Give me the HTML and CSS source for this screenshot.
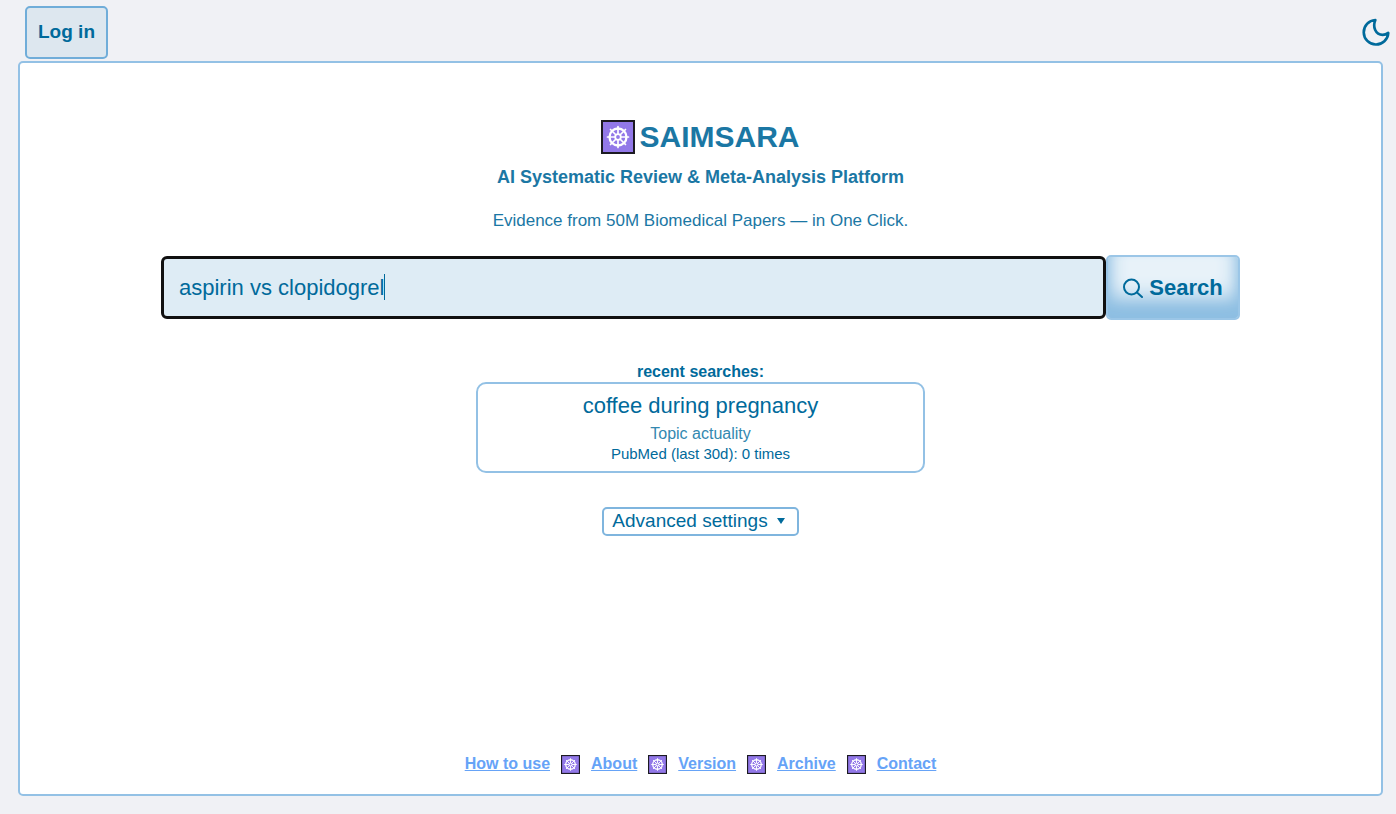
FILE: index.html
```html
<!DOCTYPE html>
<html lang="en">
<head>
  <meta charset="UTF-8">
  <meta name="viewport" content="width=device-width, initial-scale=1.0">
  <title>SAIMSARA</title>
  <link rel="stylesheet" href="styles.css">
</head>
<body>
  <svg width="0" height="0" class="sprite" aria-hidden="true">
    <symbol id="wheel" viewBox="0 0 34 34">
      <rect x="1" y="1" width="32" height="32" fill="#9278e8" stroke="#1c1a22" stroke-width="2"/>
      <g fill="none" stroke="#fff" stroke-width="2" stroke-linecap="round">
        <circle cx="17" cy="17" r="8.500" stroke-width="2.300"/>
        <circle cx="17" cy="17" r="2.800" stroke-width="1.800"/>
        <path d="M17 6.500v7M17 20.500v7M6.500 17h7M20.500 17h7M9.500 9.500l5 5M19.500 19.500l5 5M24.500 9.500l-5 5M14.500 19.500l-5 5" stroke-width="1.700"/>
      </g>
    </symbol>
  </svg>

  <header class="top-bar">
    <button type="button" class="login-btn">Log in</button>
    <button type="button" class="theme-btn" aria-label="Dark mode">
      <svg viewBox="0 0 24 24" width="32" height="32" fill="none" stroke="#006a9b" stroke-width="2" stroke-linecap="round" stroke-linejoin="round">
        <path d="M11.500 3C9.300 8.200 11.600 14.200 17 14.200C18.600 14.200 20 13.600 21.200 12.700A9.200 9.200 0 1 1 11.500 3z"/>
      </svg>
    </button>
  </header>

  <main class="page">
    <h1 class="brand">
      <svg class="brand-logo" aria-hidden="true"><use href="#wheel"/></svg>
      SAIMSARA
    </h1>
    <h2 class="subtitle">AI Systematic Review &amp; Meta-Analysis Platform</h2>
    <p class="tagline">Evidence from 50M Biomedical Papers — in One Click.</p>

    <form class="search-form">
      <div class="search-field">
        <input type="text" class="search-input" aria-label="Search topic" value="aspirin vs clopidogrel">
        <span class="caret"></span>
      </div>
      <button type="submit" class="search-btn">
        <svg viewBox="0 0 20 20" width="20" height="20" fill="none" stroke="#006a9b" stroke-width="2" stroke-linecap="round" aria-hidden="true">
          <circle cx="8.500" cy="9" r="7.500"/>
          <path d="M14 14.500l5 4.500"/>
        </svg>
        Search
      </button>
    </form>

    <section class="recent">
      <h3 class="recent-title">recent searches:</h3>
      <div class="recent-card">
        <div class="recent-topic">coffee during pregnancy</div>
        <div class="recent-label">Topic actuality</div>
        <div class="recent-count">PubMed (last 30d): 0 times</div>
      </div>
    </section>

    <button type="button" class="advanced-btn">Advanced settings <span class="arrow"></span></button>

    <footer class="footer">
      <a href="#">How to use</a>
      <svg class="footer-logo" aria-hidden="true"><use href="#wheel"/></svg>
      <a href="#">About</a>
      <svg class="footer-logo" aria-hidden="true"><use href="#wheel"/></svg>
      <a href="#">Version</a>
      <svg class="footer-logo" aria-hidden="true"><use href="#wheel"/></svg>
      <a href="#">Archive</a>
      <svg class="footer-logo" aria-hidden="true"><use href="#wheel"/></svg>
      <a href="#">Contact</a>
    </footer>
  </main>
</body>
</html>
```
FILE: styles.css
```css
* {
  box-sizing: border-box;
}

body {
  margin: 0;
  min-height: 100vh;
  padding-bottom: 18px;
  display: flex;
  flex-direction: column;
  background: #f0f1f5;
  color: #006a9b;
  font-family: Arial, "Liberation Sans", sans-serif;
}

button,
input {
  font-family: inherit;
  color: inherit;
}

button {
  cursor: pointer;
}

.sprite {
  position: absolute;
}

.top-bar {
  display: flex;
  justify-content: space-between;
  align-items: flex-start;
  padding: 6px 4px 2px 25px;
}

.login-btn {
  height: 53px;
  padding: 0 11px 2px;
  background: #dde7ef;
  border: 2px solid #70add9;
  border-radius: 5px;
  font-size: 19px;
  font-weight: bold;
}

.theme-btn {
  height: 52px;
  padding: 0;
  background: none;
  border: none;
}

.theme-btn svg {
  display: block;
}

.page {
  flex: 1;
  display: flex;
  flex-direction: column;
  align-items: center;
  margin: 0 13px 0 18px;
  padding: 57px 16px 20px;
  background: #fff;
  border: 2px solid #93c1e5;
  border-radius: 5px;
}

.brand {
  display: flex;
  align-items: center;
  gap: 4px;
  margin: 0;
  font-size: 30px;
  line-height: 34px;
  color: #1b77a4;
}

.brand-logo {
  width: 34px;
  height: 34px;
}

.subtitle {
  margin: 13px 0 0;
  font-size: 18px;
  line-height: 20px;
  font-weight: 900;
  color: #1b77a4;
}

.tagline {
  margin: 24px 0 0;
  font-size: 17px;
  line-height: 20px;
  color: #1b77a4;
}

.search-form {
  display: flex;
  align-items: center;
  width: 100%;
  max-width: 1079px;
  margin-top: 24px;
}

.search-field {
  position: relative;
  flex: 1;
}

.search-input {
  display: block;
  width: 100%;
  height: 63px;
  padding: 0 15px;
  background: #deecf5;
  border: 3px solid #101010;
  border-radius: 6px;
  font-size: 22px;
}

.caret {
  position: absolute;
  top: 18px;
  left: 223px;
  width: 1px;
  height: 26px;
  background: #006a9b;
}

.search-btn {
  display: flex;
  align-items: center;
  justify-content: center;
  gap: 6px;
  width: 134px;
  height: 65px;
  padding: 0;
  background: #e8f2f9;
  border: 2px solid #9bc6e7;
  border-radius: 5px;
  box-shadow: inset 0 -20px 20px #8dbee2, inset 0 -8px 12px #a9cfea;
  font-size: 22px;
  font-weight: bold;
}

.recent {
  width: 100%;
  max-width: 449px;
  margin-top: 42px;
  text-align: center;
}

.recent-title {
  margin: 0;
  font-size: 16px;
  line-height: 20px;
}

.recent-card {
  padding: 8px 8px 7px;
  border: 2px solid #93c1e5;
  border-radius: 10px;
}

.recent-topic {
  font-size: 22px;
  line-height: 28px;
}

.recent-label {
  margin-top: 4px;
  font-size: 16px;
  line-height: 20px;
  color: #3388b0;
}

.recent-count {
  font-size: 15px;
  line-height: 20px;
}

.advanced-btn {
  display: flex;
  align-items: center;
  gap: 9px;
  height: 29px;
  margin-top: 34px;
  padding: 0 12px 2px 8px;
  background: #fff;
  border: 2px solid #7fb5de;
  border-radius: 5px;
  font-size: 19px;
}

.arrow {
  border: 4px solid transparent;
  border-top: 6px solid #006a9b;
  border-bottom: none;
}

.footer {
  display: flex;
  flex-wrap: wrap;
  align-items: center;
  justify-content: center;
  gap: 11px;
  margin-top: auto;
}

.footer a {
  color: #66a3f7;
  font-size: 16px;
  line-height: 20px;
  font-weight: bold;
}

.footer-logo {
  width: 19px;
  height: 19px;
}
```
